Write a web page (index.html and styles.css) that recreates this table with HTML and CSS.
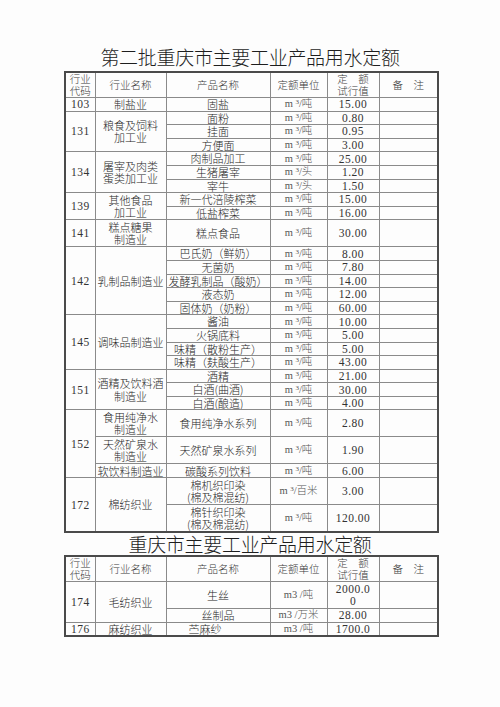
FILE: index.html
```html
<!DOCTYPE html>
<html lang="zh-CN">
<head>
<meta charset="utf-8">
<title>重庆市主要工业产品用水定额</title>
<link rel="stylesheet" href="styles.css">
</head>
<body>
<div class="page">
  <h1 class="title t1">第二批重庆市主要工业产品用水定额</h1>
  <table class="quota">
    <colgroup>
      <col class="c-code"><col class="c-ind"><col class="c-prod"><col class="c-unit"><col class="c-val"><col class="c-note">
    </colgroup>
    <tr class="hd">
      <td>行业<br>代码</td><td>行业名称</td><td>产品名称</td><td>定额单位</td><td>定　额<br>试行值</td><td>备　注</td>
    </tr>
    <tr class="r1"><td class="num">103</td><td>制盐业</td><td>固盐</td><td class="u">m <span class="sp">3</span>/吨</td><td class="num">15.00</td><td></td></tr>

    <tr class="r1"><td class="num" rowspan="3">131</td><td rowspan="3">粮食及饲料<br>加工业</td><td>面粉</td><td class="u">m <span class="sp">3</span>/吨</td><td class="num">0.80</td><td></td></tr>
    <tr class="r1"><td>挂面</td><td class="u">m <span class="sp">3</span>/吨</td><td class="num">0.95</td><td></td></tr>
    <tr class="r1"><td>方便面</td><td class="u">m <span class="sp">3</span>/吨</td><td class="num">3.00</td><td></td></tr>

    <tr class="r1"><td class="num" rowspan="3">134</td><td rowspan="3">屠宰及肉类<br>蛋类加工业</td><td>肉制品加工</td><td class="u">m <span class="sp">3</span>/吨</td><td class="num">25.00</td><td></td></tr>
    <tr class="r1"><td>生猪屠宰</td><td class="u">m <span class="sp">3</span>/头</td><td class="num">1.20</td><td></td></tr>
    <tr class="r1"><td>宰牛</td><td class="u">m <span class="sp">3</span>/头</td><td class="num">1.50</td><td></td></tr>

    <tr class="r1"><td class="num" rowspan="2">139</td><td rowspan="2">其他食品<br>加工业</td><td>新一代涪陵榨菜</td><td class="u">m <span class="sp">3</span>/吨</td><td class="num">15.00</td><td></td></tr>
    <tr class="r1"><td>低盐榨菜</td><td class="u">m <span class="sp">3</span>/吨</td><td class="num">16.00</td><td></td></tr>

    <tr class="r2"><td class="num">141</td><td>糕点糖果<br>制造业</td><td>糕点食品</td><td class="u">m <span class="sp">3</span>/吨</td><td class="num">30.00</td><td></td></tr>

    <tr class="r1"><td class="num" rowspan="5">142</td><td rowspan="5">乳制品制造业</td><td>巴氏奶（鲜奶）</td><td class="u">m <span class="sp">3</span>/吨</td><td class="num">8.00</td><td></td></tr>
    <tr class="r1"><td>无菌奶</td><td class="u">m <span class="sp">3</span>/吨</td><td class="num">7.80</td><td></td></tr>
    <tr class="r1"><td>发酵乳制品（酸奶）</td><td class="u">m <span class="sp">3</span>/吨</td><td class="num">14.00</td><td></td></tr>
    <tr class="r1"><td>液态奶</td><td class="u">m <span class="sp">3</span>/吨</td><td class="num">12.00</td><td></td></tr>
    <tr class="r1"><td>固体奶（奶粉）</td><td class="u">m <span class="sp">3</span>/吨</td><td class="num">60.00</td><td></td></tr>

    <tr class="r1"><td class="num" rowspan="4">145</td><td rowspan="4">调味品制造业</td><td>酱油</td><td class="u">m <span class="sp">3</span>/吨</td><td class="num">10.00</td><td></td></tr>
    <tr class="r1"><td>火锅底料</td><td class="u">m <span class="sp">3</span>/吨</td><td class="num">5.00</td><td></td></tr>
    <tr class="r1"><td>味精（散粉生产）</td><td class="u">m <span class="sp">3</span>/吨</td><td class="num">5.00</td><td></td></tr>
    <tr class="r1"><td>味精（麸酸生产）</td><td class="u">m <span class="sp">3</span>/吨</td><td class="num">43.00</td><td></td></tr>

    <tr class="r1"><td class="num" rowspan="3">151</td><td rowspan="3">酒精及饮料酒<br>制造业</td><td>酒精</td><td class="u">m <span class="sp">3</span>/吨</td><td class="num">21.00</td><td></td></tr>
    <tr class="r1"><td>白酒(曲酒)</td><td class="u">m <span class="sp">3</span>/吨</td><td class="num">30.00</td><td></td></tr>
    <tr class="r1"><td>白酒(酿造)</td><td class="u">m <span class="sp">3</span>/吨</td><td class="num">4.00</td><td></td></tr>

    <tr class="r2"><td class="num" rowspan="3">152</td><td>食用纯净水<br>制造业</td><td>食用纯净水系列</td><td class="u">m <span class="sp">3</span>/吨</td><td class="num">2.80</td><td></td></tr>
    <tr class="r2"><td>天然矿泉水<br>制造业</td><td>天然矿泉水系列</td><td class="u">m <span class="sp">3</span>/吨</td><td class="num">1.90</td><td></td></tr>
    <tr class="r1"><td>软饮料制造业</td><td>碳酸系列饮料</td><td class="u">m <span class="sp">3</span>/吨</td><td class="num">6.00</td><td></td></tr>

    <tr class="r2"><td class="num" rowspan="2">172</td><td rowspan="2">棉纺织业</td><td>棉机织印染<br>(棉及棉混纺)</td><td class="u">m <span class="sp">3</span>/百米</td><td class="num">3.00</td><td></td></tr>
    <tr class="r2"><td>棉针织印染<br>(棉及棉混纺)</td><td class="u">m <span class="sp">3</span>/吨</td><td class="num">120.00</td><td></td></tr>
  </table>

  <h1 class="title t2">重庆市主要工业产品用水定额</h1>
  <table class="quota">
    <colgroup>
      <col class="c-code"><col class="c-ind"><col class="c-prod"><col class="c-unit"><col class="c-val"><col class="c-note">
    </colgroup>
    <tr class="hd">
      <td>行业<br>代码</td><td>行业名称</td><td>产品名称</td><td>定额单位</td><td>定　额<br>试行值</td><td>备　注</td>
    </tr>
    <tr class="r2"><td class="num" rowspan="2">174</td><td rowspan="2">毛纺织业</td><td>生丝</td><td class="u">m3 /吨</td><td class="num">2000.0<br>0</td><td></td></tr>
    <tr class="r1"><td>丝制品</td><td class="u">m3 /万米</td><td class="num">28.00</td><td></td></tr>
    <tr class="r1"><td class="num">176</td><td>麻纺织业</td><td class="left">苎麻纱</td><td class="u">m3 /吨</td><td class="num">1700.0</td><td></td></tr>
  </table>
</div>
</body>
</html>
```

FILE: styles.css
```css
html, body {
  margin: 0;
  padding: 0;
  background: #fdfdfd;
}

.page {
  width: 500px;
  padding-top: 46px;
  color: #262626;
  font-family: "Noto Sans CJK SC", "Noto Sans CJK JP", sans-serif;
}

.title {
  margin: 0;
  font-size: 19px;
  line-height: 22px;
  font-weight: 300;
  text-align: center;
  color: #1e1e1e;
  letter-spacing: -0.3px;
}

.t1 {
  margin-bottom: 3px;
}

.t2 {
  margin-top: 0;
  margin-bottom: 0;
}

.quota {
  margin-left: 64px;
  width: 373px;
  border-collapse: collapse;
  table-layout: fixed;
  border: 2px solid #4a4a4a;
  font-size: 11px;
  line-height: 12.5px;
  font-weight: 300;
}

.c-code { width: 30px; }
.c-ind { width: 71px; }
.c-prod { width: 104px; }
.c-unit { width: 57px; }
.c-val { width: 52px; }
.c-note { width: 59px; }

.quota td {
  border: 1px solid #8a8a8a;
  padding: 0;
  text-align: center;
  vertical-align: middle;
  white-space: nowrap;
  overflow: hidden;
}

.quota tr.hd td {
  height: 24px;
  font-size: 10.5px;
  line-height: 12px;
  color: #3a3a3a;
}

.quota tr.r1 td {
  height: 12.6px;
}

.quota tr.r2 td {
  height: 26px;
}

.num {
  font-family: "Liberation Serif", serif;
  font-size: 11.5px;
  line-height: 12px;
  letter-spacing: 0.5px;
  color: #333;
}

.u {
  font-family: "Liberation Serif", "Noto Sans CJK SC", serif;
  font-size: 10.5px;
  line-height: 12px;
  color: #555;
}

.sp {
  font-size: 7px;
  vertical-align: 3px;
  line-height: 0;
}

.left {
  text-align: left !important;
  padding-left: 22px !important;
}
```
